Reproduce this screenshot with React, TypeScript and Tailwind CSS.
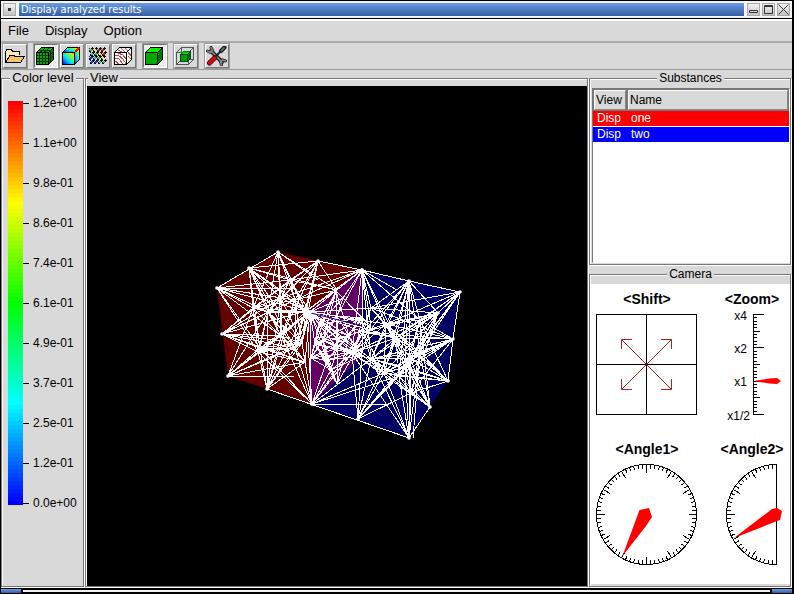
import React from "react";

type Point = [number, number];

const LEVELS = [
  "1.2e+00", "1.1e+00", "9.8e-01", "8.6e-01", "7.4e-01", "6.1e-01",
  "4.9e-01", "3.7e-01", "2.5e-01", "1.2e-01", "0.0e+00",
];

const RED_RIM: Point[] = [
  [130, 202], [162, 182], [191, 166], [231, 175], [275, 184],
  [135, 248], [141, 290], [180, 303], [225, 318], [223, 226],
];
const RED_CORE: Point[] = [
  [166, 222], [173, 262], [171, 266], [181, 226], [194, 250], [208, 262],
  [208, 214], [194, 212], [203, 194], [250, 204], [219, 225], [218, 276], [215, 257],
];
const BLUE_RIM: Point[] = [
  [275, 184], [322, 195], [373, 206], [351, 227], [366, 253],
  [361, 295], [343, 321], [322, 352], [271, 333], [225, 318], [223, 226],
];
const BLUE_CORE: Point[] = [
  [299, 238], [284, 222], [309, 252], [297, 287], [323, 272], [333, 234],
  [284, 273], [265, 267], [318, 281], [276, 246], [333, 266], [312, 290], [324, 307],
];
const SHARED_FACE: Point[] = [
  [223, 226], [249, 205], [275, 184], [275, 232], [274, 270], [250, 298], [225, 318], [224, 272],
];
const SHARED_CORE: Point[] = [
  [236, 254], [250, 230], [262, 250], [240, 274], [268, 266], [256, 212],
  [232, 238], [244, 284], [284, 240], [228, 258], [250, 262],
];

function meshPath(rim: Point[], core: Point[], reach: number, coreReach: number): string {
  const parts: string[] = [];
  const join = (a: Point, b: Point, limit: number) => {
    if (Math.hypot(a[0] - b[0], a[1] - b[1]) < limit) {
      parts.push(`M${a[0]} ${a[1]}L${b[0]} ${b[1]}`);
    }
  };
  rim.forEach((a) => core.forEach((b) => join(a, b, reach)));
  core.forEach((a, i) => core.slice(i + 1).forEach((b) => join(a, b, coreReach)));
  return parts.join("");
}

const RED_MESH = meshPath(RED_RIM, RED_CORE, 94, 50);
const BLUE_MESH = meshPath(BLUE_RIM, BLUE_CORE, 96, 50);
const SHARED_MESH = meshPath(SHARED_FACE, SHARED_CORE, 60, 36);

function MeshView() {
  return (
    <svg viewBox="0 0 500 500" className="block w-full" role="img" aria-label="Mesh of two substances">
      <path d="M130 202L191 166L275 184L274 280L225 318L141 290Z" fill="#640000" />
      <path d="M275 184L373 206L361 295L343 321L322 352L225 318L223 226Z" fill="#000064" />
      <path d="M223 226L275 184L274 271L225 318Z" fill="#640064" />
      <g fill="none" stroke="#fff" strokeWidth="1" shapeRendering="crispEdges">
        <path d="M130 202L191 166M231 175L275 184M322 195L373 206M180 303L322 352" />
        <path d={RED_MESH} />
        <path d={BLUE_MESH} />
        <path d={SHARED_MESH} />
        <path d="M373 206L366 253L361 295M322 352L343 321M322 352V212M326 352L333 266M322 352L284 273M322 352L265 267M322 195V230M130 202H208M141 290H207M225 318H300M223 226V318M162 182L231 175M162 182L203 194M231 175L208 262M191 166L250 204M275 184L322 195L351 227L373 206M191 166L231 194M275 184L310 204" />
      </g>
      <path d="M224 227L275 240" stroke="#000080" />
      <g fill="#fff">
        {[...RED_RIM, ...BLUE_RIM].map(([x, y], i) => (
          <circle key={i} cx={x} cy={y} r="1.800" />
        ))}
      </g>
    </svg>
  );
}

function Cube({ front, top, side, children }: { front: string; top: string; side: string; children?: React.ReactNode }) {
  return (
    <g stroke="#000" strokeLinejoin="round">
      <path d="M1.500 6.500L6.500 1.500H18.500L13.500 6.500Z" fill={top} />
      <path d="M13.500 6.500L18.500 1.500V13.500L13.500 18.500Z" fill={side} />
      <path d="M1.500 6.500H13.500V18.500H1.500Z" fill={front} />
      {children}
    </g>
  );
}

const openIcon = (
  <g stroke="#000">
    <path d="M1.500 16V5.500L3 3.500H7L9 5.500H15.500V9" fill="#ffe9b8" />
    <path d="M1.500 16.500L6 9.500H10L11 10.500H20.500L16.500 16.500Z" fill="#f5c468" />
  </g>
);
const gridCubeIcon = (
  <Cube front="#10a010" top="#10b010" side="#087008">
    <path d="M4.500 7V18M7.500 7V18M10.500 7V18M2 9.500H13M2 12.500H13M2 15.500H13" stroke="#033a03" fill="none" />
    <path d="M5.500 6L10.500 1.500M9.500 6L14.500 1.500M4 4.500H15.500V16M13.500 10.500L18.500 5.500M13.500 14.500L18.500 9.500" stroke="#033a03" fill="none" />
  </Cube>
);
const contourIcon = (
  <>
    <defs>
      <linearGradient id="contour" x1="0" y1="1" x2="1" y2="0">
        <stop offset="0.1" stopColor="#0030ff" />
        <stop offset="0.4" stopColor="#00d8ff" />
        <stop offset="0.65" stopColor="#50ff60" />
        <stop offset="0.85" stopColor="#ffe800" />
        <stop offset="1" stopColor="#ff2000" />
      </linearGradient>
    </defs>
    <Cube front="url(#contour)" top="url(#contour)" side="url(#contour)">
      <path d="M14 6L18 2" stroke="#f00" strokeWidth="2" />
    </Cube>
  </>
);
const ARROW_COLORS = ["#1040d0", "#30b8d8", "#50b850", "#f0e040", "#c02020"];
const vectorIcon = (
  <g>
    {[0, 1, 2, 3].flatMap((r) =>
      [0, 1, 2, 3].map((c) => {
        const x = 2 + c * 4 + (r % 2);
        const y = 2 + r * 4;
        return (
          <g key={`${r}-${c}`}>
            <path d={`M${x} ${y + 4}L${x + 4} ${y}`} stroke="#111" strokeWidth="1.500" />
            <path d={`M${x} ${y}L${x + 3} ${y + 3}`} stroke="#223" />
            <rect x={x + 1} y={y + 1} width="2" height="2" fill={ARROW_COLORS[Math.max(0, Math.min(4, c + 2 - r))]} />
          </g>
        );
      }),
    )}
  </g>
);
const isolineIcon = (
  <Cube front="#fff" top="#fff" side="#fff">
    <path d="M2 9L6 10L10 13L13 18M2 12L6 13L10 18M2 15L6 18M5 7L10 9L13 13M5 4L9 6M8 2L12 6M12 2L15 5M15 6L18 10M15 10L18 13" stroke="#d84040" fill="none" />
  </Cube>
);
const solidIcon = <Cube front="#00a800" top="#00f000" side="#007800" />;
const innerIcon = (
  <g stroke="#555" fill="none">
    <path d="M1.500 6.500L6.500 1.500H18.500V13.500L13.500 18.500H1.500ZM1.500 6.500H13.500V18.500M13.500 6.500L18.500 1.500M6.500 1.500V13.500H18.500M1.500 18.500L6.500 13.500" />
    <path d="M5.500 8.500L8.500 5.500H15.500L12.500 8.500Z" fill="#00d800" stroke="#063" />
    <path d="M12.500 8.500L15.500 5.500V12.500L12.500 15.500Z" fill="#006800" stroke="#042" />
    <path d="M5.500 8.500H12.500V15.500H5.500Z" fill="#00a000" stroke="#042" />
  </g>
);
const toolsIcon = (
  <g strokeLinecap="round" fill="none" shapeRendering="geometricPrecision">
    <path d="M5 5L16 16" stroke="#222" strokeWidth="4" />
    <path d="M1.500 5L4.500 6.500L6.500 4.500L5 1.500M19.500 15L16.500 14L14.500 16L15.500 19" stroke="#222" strokeWidth="3" />
    <path d="M5 5L16 16M1.500 5L4.500 6.500L6.500 4.500L5 1.500M19.500 15L16.500 14L14.500 16L15.500 19" stroke="#888" strokeWidth="1.500" />
    <path d="M10 10L15 5" stroke="#222" strokeWidth="2" />
    <path d="M15 5L18.500 1.500" stroke="#222" strokeWidth="4" />
    <path d="M15.500 4.500L18 2" stroke="#777" strokeWidth="1.500" />
    <path d="M3.500 17L8.500 12" stroke="#400" strokeWidth="5" />
    <path d="M3.500 17L8.500 12" stroke="#d01010" strokeWidth="3.500" />
  </g>
);

function ToolButton({ label, pressed = false, children }: { label: string; pressed?: boolean; children: React.ReactNode }) {
  const look = pressed
    ? "border-t-[#777] border-l-[#777] border-r-white border-b-white bg-[#ececec]"
    : "border-t-white border-l-white border-r-[#777] border-b-[#777] bg-[#d9d9d9]";
  return (
    <button type="button" aria-label={label} aria-pressed={pressed} className={`flex size-[26px] items-center justify-start border-2 outline-1 -outline-offset-1 outline-[#999] ${look}`}>
      <svg viewBox="0 0 21 20" width="21" height="20" className="shrink-0" shapeRendering="crispEdges">{children}</svg>
    </button>
  );
}

function Panel({ title, legendClass, className, children }: { title: string; legendClass: string; className: string; children: React.ReactNode }) {
  return (
    <fieldset className={`mr-px mb-px flex min-w-0 flex-col border border-[#777] pl-px shadow-[1px_1px_0_#fff,inset_1px_1px_0_#fff] ${className}`}>
      <legend className={`h-4 bg-[#d9d9d9] px-0.5 leading-4 ${legendClass}`}>{title}</legend>
      {children}
    </fieldset>
  );
}

function ColorLevels() {
  return (
    <div className="flex pl-[5px]">
      <svg width="15" height="404" viewBox="0 0 15 404" className="mt-[15px]" shapeRendering="crispEdges" aria-hidden="true">
        {Array.from({ length: 101 }, (_, i) => (
          <rect key={i} y={i * 4} width="15" height="4" fill={`hsl(${i * 2.4} 100% 50%)`} />
        ))}
      </svg>
      <ul className="flex flex-col gap-6 pt-[9px] text-[12px] leading-4">
        {LEVELS.map((level) => (
          <li key={level} className="flex h-4 items-center gap-1">
            <span className="h-px w-[6px] bg-black" />
            {level}
          </li>
        ))}
      </ul>
    </div>
  );
}

const SUBSTANCES = [
  { name: "one", row: "bg-[#ff0000]" },
  { name: "two", row: "bg-[#0000ff]" },
];

function SubstanceTable() {
  const head = "h-[22px] border-2 border-t-white border-l-white border-r-[#888] border-b-[#888] bg-[#d9d9d9] p-0 pl-px text-left font-normal outline-1 -outline-offset-1 outline-[#777]";
  return (
    <div className="mt-[2px] mb-px ml-px flex-1 border border-t-[#777] border-l-[#777] border-r-white border-b-white bg-white">
      <table className="w-full table-fixed border-separate border-spacing-0 text-[12px] leading-[15px]">
        <thead>
          <tr>
            <th scope="col" className={`w-[34px] ${head}`}>View</th>
            <th scope="col" className={head}>Name</th>
          </tr>
        </thead>
        <tbody>
          {SUBSTANCES.map((s) => (
            <tr key={s.name} className={`text-white ${s.row}`}>
              <td className="border-b border-white p-0 pl-1">Disp</td>
              <td className="border-b border-white p-0 pl-1">{s.name}</td>
            </tr>
          ))}
        </tbody>
      </table>
    </div>
  );
}

function ticks(cx: number, cy: number, from: number, to: number): string {
  let d = "";
  for (let a = from; a <= to; a += 5) {
    const t = (a * Math.PI) / 180;
    const inner = a % 30 === 0 ? 42 : 46;
    d += `M${cx + Math.cos(t) * inner} ${cy + Math.sin(t) * inner}L${cx + Math.cos(t) * 50} ${cy + Math.sin(t) * 50}`;
  }
  return d;
}

function Control({ id, title, children, input }: { id: string; title: string; children: React.ReactNode; input: React.ReactNode }) {
  return (
    <div className="flex flex-col items-center gap-[7px]">
      <label htmlFor={id} className="text-[14px] leading-4 font-bold whitespace-nowrap">{title}</label>
      <div className="relative">
        {children}
        {input}
      </div>
    </div>
  );
}

const HIDDEN_INPUT = "absolute inset-0 size-full cursor-pointer opacity-0";

function Camera() {
  return (
    <div className="mt-[2px] mb-[2px] grid grid-cols-[102px_66px] justify-between gap-y-[25px] bg-white px-[5px] pt-[7px] pb-[18px]">
      <Control id="shift" title="<Shift>" input={<button id="shift" type="button" className={HIDDEN_INPUT} />}>
        <svg width="102" height="102" className="block" fill="none">
          <path d="M0.500 0.500H100.500V100.500H0.500ZM50.500 0V100M0 50.500H100" stroke="#000" shapeRendering="crispEdges" />
          <path d="M25.500 25.500L75.500 75.500M75.500 25.500L25.500 75.500M25.500 35V25.500H36M65 25.500H75.500V35M25.500 65V75.500H36M65 75.500H75.500V65" stroke="#b02020" />
        </svg>
      </Control>
      <Control id="zoom" title="<Zoom>" input={<input id="zoom" type="range" min="0.5" max="4" step="0.1" defaultValue="1" className={HIDDEN_INPUT} />}>
        <svg width="66" height="102" className="block overflow-visible">
          <g fontSize="12" textAnchor="end">
            <text x="28" y="6">x4</text>
            <text x="28" y="39">x2</text>
            <text x="28" y="72">x1</text>
            <text x="31" y="106">x1/2</text>
          </g>
          <path
            d={"M34.500 0V101" + Array.from({ length: 31 }, (_, i) => `M34 ${Math.round((i * 10) / 3) + 0.5}h${i % 10 === 0 ? 11 : i % 5 === 0 ? 7 : 4}`).join("")}
            stroke="#000" fill="none" shapeRendering="crispEdges"
          />
          <path d="M35 67L50 64.500L58 64L62 67L58 70L50 69.500Z" fill="#f00" />
        </svg>
      </Control>
      <Control id="angle1" title="<Angle1>" input={<input id="angle1" type="range" min="0" max="360" defaultValue="210" className={HIDDEN_INPUT} />}>
        <svg width="102" height="102" className="block" fill="none">
          <g stroke="#000" shapeRendering="crispEdges">
            <circle cx="50.5" cy="50.5" r="50" />
            <path d={ticks(50.5, 50.5, 0, 355)} />
          </g>
          <path d="M26.500 92L43.500 46L53 44L56 53L50 62Z" fill="#f00" />
        </svg>
      </Control>
      <Control id="angle2" title="<Angle2>" input={<input id="angle2" type="range" min="0" max="180" defaultValue="60" className={HIDDEN_INPUT} />}>
        <svg width="66" height="102" className="block" fill="none">
          <g stroke="#000" shapeRendering="crispEdges">
            <path d="M57.500 0.500A50 50 0 0 0 57.500 100.500Z" />
            <path d={ticks(57.5, 50.5, 90, 270)} />
          </g>
          <path d="M15 74L53 45L58 44L63 47L61 56L58 57Z" fill="#f00" />
        </svg>
      </Control>
    </div>
  );
}

const WINDOW_BUTTON = "flex size-[13px] items-center justify-center border border-[#aaa] bg-linear-to-b from-[#f2f2f2] to-[#c4c4c4]";

export default function App() {
  return (
    <div className="flex min-h-screen flex-col border-r-2 border-l border-black bg-[#d9d9d9] font-['Liberation_Sans',Arial,sans-serif] text-[12px] text-black">
      <header className="flex h-[19px] items-center gap-[3px] border-y border-black bg-[#f4f4f4] px-[2px]">
        <button type="button" aria-label="Window menu" className={WINDOW_BUTTON}>
          <span className="size-[3px] bg-[#333]" />
        </button>
        <h1 className="h-[13px] flex-1 bg-linear-to-b from-[#6c9de2] to-[#335ca3] pl-[2px] font-['DejaVu_Sans_Condensed','DejaVu_Sans',sans-serif] text-[11px] leading-[13px] text-white">
          Display analyzed results
        </h1>
        <div className="flex gap-[2px]">
          <button type="button" aria-label="Minimize" className={WINDOW_BUTTON}>
            <svg width="11" height="11" fill="none" stroke="#333"><path d="M1.500 6.500H9.500V8.500H1.500Z" /></svg>
          </button>
          <button type="button" aria-label="Maximize" className={WINDOW_BUTTON}>
            <svg width="11" height="11" fill="none" stroke="#333"><path d="M1.500 1.500H9.500V9.500H1.500ZM1 2.500H10" /></svg>
          </button>
          <button type="button" aria-label="Close" className={WINDOW_BUTTON}>
            <svg width="11" height="11" fill="none" stroke="#333"><path d="M0.500 0.500L10.500 10.500M10.500 0.500L0.500 10.500" /></svg>
          </button>
        </div>
      </header>

      <nav className="flex h-6 items-center gap-4 border-t-2 border-b-2 border-t-white border-b-[#aaa] pl-[7px] text-[13px]">
        <button type="button">File</button>
        <button type="button">Display</button>
        <button type="button">Option</button>
      </nav>

      <div role="toolbar" className="flex h-[27px] gap-[5px] border-b border-[#999] pl-px">
        <ToolButton label="Open">{openIcon}</ToolButton>
        <div className="flex">
          <ToolButton label="Mesh" pressed>{gridCubeIcon}</ToolButton>
          <ToolButton label="Contour">{contourIcon}</ToolButton>
          <ToolButton label="Vectors">{vectorIcon}</ToolButton>
          <ToolButton label="Isolines">{isolineIcon}</ToolButton>
        </div>
        <ToolButton label="Solid" pressed>{solidIcon}</ToolButton>
        <ToolButton label="Inner">{innerIcon}</ToolButton>
        <ToolButton label="Settings">{toolsIcon}</ToolButton>
      </div>

      <main className="flex flex-1">
        <Panel title="Color level" legendClass="mx-auto text-[13px]" className="w-[83px] shrink-0">
          <ColorLevels />
        </Panel>
        <Panel title="View" legendClass="ml-px text-[13px]" className="flex-1">
          <div className="flex flex-1 items-center bg-black">
            <MeshView />
          </div>
        </Panel>
        <div className="flex w-[203px] shrink-0 flex-col">
          <Panel title="Substances" legendClass="mx-auto" className="flex-1">
            <SubstanceTable />
          </Panel>
          <Panel title="Camera" legendClass="mx-auto" className="">
            <Camera />
          </Panel>
        </div>
      </main>

      <footer className="flex h-[6px] items-center gap-[2px] bg-black">
        <span className="h-1 w-5 bg-linear-to-b from-[#6c9de2] to-[#335ca3]" />
        <span className="h-[2px] flex-1 bg-[#f0f0f0]" />
        <span className="h-1 w-5 bg-linear-to-b from-[#6c9de2] to-[#335ca3]" />
      </footer>
    </div>
  );
}
